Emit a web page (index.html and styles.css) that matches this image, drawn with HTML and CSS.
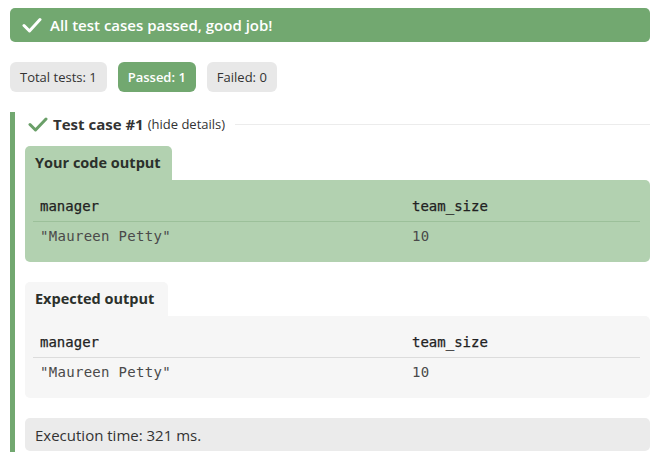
FILE: index.html
```html
<!DOCTYPE html>
<html>
<head>
<meta charset="utf-8">
<link rel="stylesheet" href="styles.css">
</head>
<body>
<div class="page">
  <div class="banner">
    <svg class="banner-check" width="20" height="16" viewBox="0 0 20 16"><path d="M2 8.5 L7.5 14 L18 2.5" fill="none" stroke="#fff" stroke-width="3" stroke-linecap="round" stroke-linejoin="round"/></svg>
    <span>All test cases passed, good job!</span>
  </div>
  <div class="badges">
    <span class="badge">Total tests: 1</span>
    <span class="badge badge-pass">Passed: 1</span>
    <span class="badge">Failed: 0</span>
  </div>
  <div class="case">
    <div class="case-head">
      <svg class="case-check" width="20" height="15" viewBox="0 0 20 15"><path d="M2 7.5 L7.5 13 L18 2" fill="none" stroke="#6a9f68" stroke-width="3" stroke-linecap="round" stroke-linejoin="round"/></svg>
      <span class="case-title">Test case #1</span>
      <span class="case-toggle">(hide details)</span>
      <span class="case-rule"></span>
    </div>
    <div class="output output-yours">
      <div class="tab">Your code output</div>
      <div class="box">
        <table class="result">
          <tr><th>manager</th><th>team_size</th></tr>
          <tr><td>"Maureen Petty"</td><td>10</td></tr>
        </table>
      </div>
    </div>
    <div class="output output-expected">
      <div class="tab">Expected output</div>
      <div class="box">
        <table class="result">
          <tr><th>manager</th><th>team_size</th></tr>
          <tr><td>"Maureen Petty"</td><td>10</td></tr>
        </table>
      </div>
    </div>
    <div class="exec">Execution time: 321 ms.</div>
  </div>
</div>
</body>
</html>
```
FILE: styles.css
```css
* { box-sizing: border-box; }
html, body { margin: 0; padding: 0; background: #fff; }
body {
  font-family: "Open Sans", "Liberation Sans", sans-serif;
  color: #2b2f2b;
}
.page {
  width: 640px;
  margin-left: 10px;
  padding-top: 8px;
}
.banner {
  height: 34px;
  background: #72a870;
  border-radius: 5px;
  display: flex;
  align-items: center;
  gap: 8px;
  padding-left: 12px;
  color: #fff;
  font-weight: 600;
  font-size: 15px;
}
.banner-check { display: block; }
.badges {
  display: flex;
  gap: 11px;
  margin-top: 20px;
}
.badge {
  height: 30px;
  display: flex;
  align-items: center;
  padding: 0 10px;
  border-radius: 6px;
  background: #e8e8e8;
  font-size: 13px;
  color: #333;
}
.badge-pass {
  background: #72a870;
  color: #fff;
  font-weight: 600;
}
.case {
  margin-top: 20px;
  border-left: 5px solid #72a870;
  padding-left: 10px;
  padding-bottom: 1px;
}
.case-head {
  display: flex;
  align-items: center;
  height: 24px;
  padding-left: 3px;
}
.case-check { display: block; margin-right: 5px; }
.case-title {
  font-weight: 700;
  font-size: 15px;
  color: #333;
}
.case-toggle {
  font-size: 13px;
  margin-left: 4px;
  color: #333;
}
.case-rule {
  flex: 1;
  height: 1px;
  background: #ececec;
  margin-left: 10px;
}
.output { margin-top: 10px; }
.output-expected { margin-top: 20px; }
.tab {
  display: block;
  height: 34px;
  line-height: 34px;
  padding: 0 10px;
  border-radius: 5px 5px 0 0;
  font-weight: 700;
  font-size: 14.5px;
  color: #2b302b;
}
.box {
  border-radius: 0 5px 5px 5px;
  padding: 11px 10px 11px 8px;
}
.output-yours .tab, .output-yours .box { background: #b2d1b0; }
.output-yours .tab { width: 147px; }
.output-expected .tab, .output-expected .box { background: #f6f6f6; }
.output-expected .tab { width: 143px; }
.result {
  width: 100%;
  border-collapse: collapse;
  font-family: "DejaVu Sans Mono", monospace;
  font-size: 14px;
}
.result th {
  text-align: left;
  font-weight: 400;
  color: #222;
  height: 30px;
  padding: 0 7px;
  vertical-align: middle;
  -webkit-text-stroke: 0.25px #222;
}
.result td {
  height: 30px;
  padding: 0 7px;
  color: #4a4a4a;
  letter-spacing: 0.3px;
  vertical-align: middle;
}
.result th:first-child, .result td:first-child { width: 372px; }
.output-yours .result th { border-bottom: 1px solid #9cc09a; }
.output-expected .result th { border-bottom: 1px solid #dcdcdc; }
.exec {
  margin-top: 20px;
  height: 33px;
  background: #ebebeb;
  border-radius: 5px;
  display: flex;
  align-items: center;
  padding-left: 10px;
  font-size: 15px;
  color: #333;
}
```
